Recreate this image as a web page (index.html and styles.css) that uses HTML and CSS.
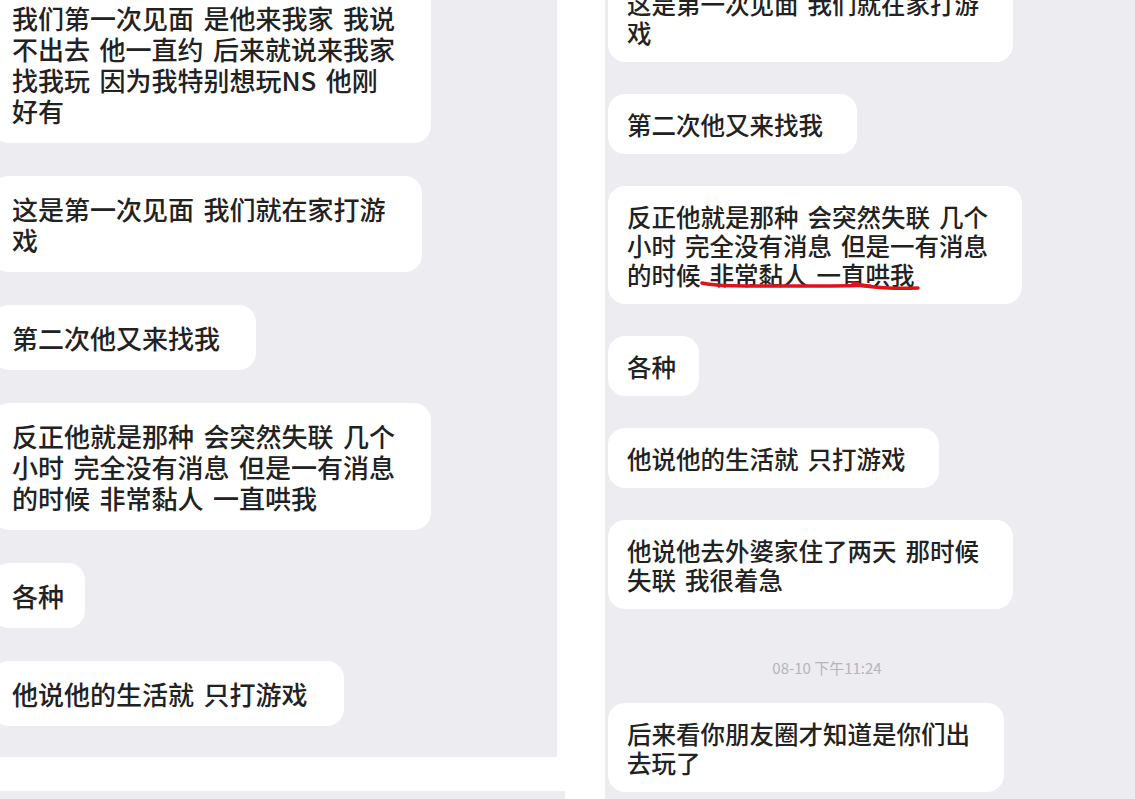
FILE: index.html
```html
<!DOCTYPE html>
<html lang="zh-CN">
<head>
    <meta charset="UTF-8">
    <meta name="viewport" content="width=device-width, initial-scale=1.0">
    <title>聊天记录</title>
    <link rel="stylesheet" href="styles.css">
</head>
<body>
    <div class="collage">
        <div class="col-left">
            <section class="chat chat-left">
                <div class="thread">
                    <p class="msg">我们第一次见面 是他来我家 我说<br>不出去 他一直约 后来就说来我家<br>找我玩 因为我特别想玩NS 他刚<br>好有</p>
                    <p class="msg">这是第一次见面 我们就在家打游<br>戏</p>
                    <p class="msg">第二次他又来找我</p>
                    <p class="msg">反正他就是那种 会突然失联 几个<br>小时 完全没有消息 但是一有消息<br>的时候 非常黏人 一直哄我</p>
                    <p class="msg tight">各种</p>
                    <p class="msg">他说他的生活就 只打游戏</p>
                </div>
            </section>
            <section class="chat chat-next"></section>
        </div>

        <section class="chat chat-right">
            <div class="thread">
                <p class="msg">这是第一次见面 我们就在家打游<br>戏</p>
                <p class="msg">第二次他又来找我</p>
                <p class="msg">反正他就是那种 会突然失联 几个<br>小时 完全没有消息 但是一有消息<br>的时候 非常黏人 一直哄我
                    <!-- red pen mark over the last words -->
                    <svg class="scribble" viewBox="0 0 232 18" width="232" height="18">
                        <path d="M4 7 C 20 11, 60 10, 110 10 S 160 9, 172 10" />
                        <path d="M155 7 C 170 12, 200 13, 220 12" />
                    </svg>
                </p>
                <p class="msg tight">各种</p>
                <p class="msg">他说他的生活就 只打游戏</p>
                <p class="msg">他说他去外婆家住了两天 那时候<br>失联 我很着急</p>
                <div class="time">08-10 下午11:24</div>
                <p class="msg">后来看你朋友圈才知道是你们出<br>去玩了</p>
            </div>
        </section>
    </div>
</body>
</html>
```

FILE: styles.css
```css
body {
    margin: 0;
    background: #fff;
    font-family: "Noto Sans CJK SC", "Noto Sans", sans-serif;
    color: #222;
}
.collage {
    display: flex;
    gap: 48px;
    height: 799px;
    overflow: hidden;
}
.col-left {
    width: 557px;
    display: flex;
    flex-direction: column;
}
.chat {
    background-color: #ececf1;
    overflow: hidden;
}
.chat-left {
    height: 757px;
    flex: none;
}
.chat-next {
    margin-top: 34px;
    width: 565px;
    flex: 1;
}
.chat-right {
    flex: 1;
}
.thread {
    display: flex;
    flex-direction: column;
    align-items: flex-start;
}
.msg {
    position: relative;
    margin: 0;
    background: #fff;
    border-radius: 17px;
    white-space: nowrap;
    word-spacing: 0.14em;
    font-weight: 500;
}

/* left screenshot, a bit bigger */
.chat-left .thread {
    margin: -15px 0 0 -8px;
}
.chat-left .msg {
    font-size: 26px;
    line-height: 31px;
    padding: 17px 36px 17px 20px;
    margin-bottom: 33px;
}
.chat-left .msg.tight {
    padding-right: 21px;
}

/* right screenshot */
.chat-right .thread {
    width: 438px;
    margin: -27px 0 0 3px;
}
.chat-right .msg {
    font-size: 24.5px;
    line-height: 29px;
    padding: 15.5px 34px 15.5px 19px;
    margin-bottom: 32px;
}
.chat-right .msg.tight {
    padding-right: 23px;
}
.time {
    align-self: stretch;
    text-align: center;
    font-size: 15px;
    line-height: 22px;
    color: #b5b5ba;
    margin: 0 0 24px;
    padding-top: 16px;
}
.scribble {
    position: absolute;
    left: 90px;
    top: 90px;
    fill: none;
    stroke: #e0121c;
    stroke-width: 3.5;
    stroke-linecap: round;
}
```
